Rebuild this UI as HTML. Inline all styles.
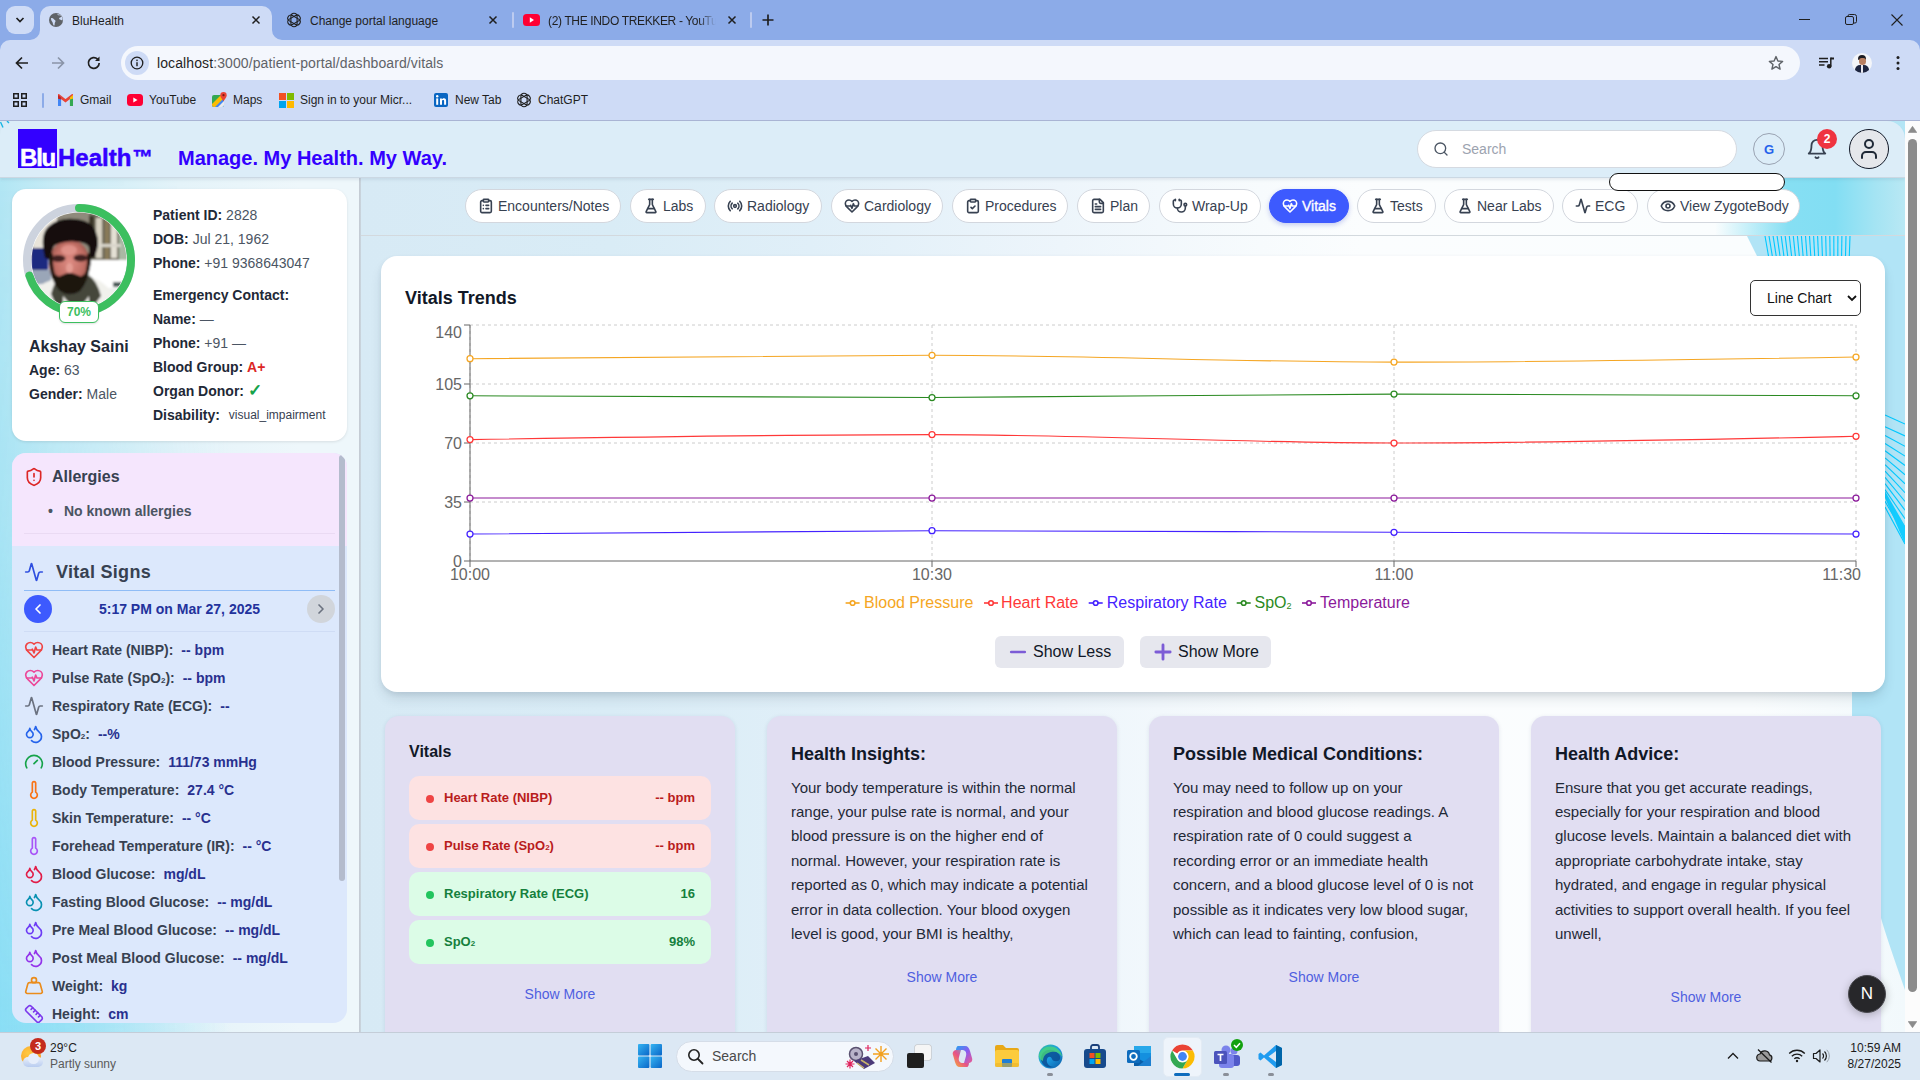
<!DOCTYPE html>
<html lang="en">
<head>
<meta charset="utf-8">
<title>BluHealth</title>
<style>
*{box-sizing:border-box;margin:0;padding:0}
html,body{width:1920px;height:1080px;overflow:hidden;background:#d9ecf7;font-family:"Liberation Sans",sans-serif;color:#1f2937}
.abs{position:absolute}
svg{display:block}
/* ---------- browser chrome ---------- */
#tabstrip{position:absolute;left:0;top:0;width:1920px;height:40px;background:#8cabe8}
#toolbar{position:absolute;left:0;top:40px;width:1920px;height:81px;background:#cedbf6;border-bottom:1px solid #a9b4d4;z-index:5}
.tabtxt{position:absolute;top:14px;font-size:12px;line-height:14px;color:#1f1f1f;white-space:nowrap}
.bm{position:absolute;top:93px;font-size:12px;line-height:15px;color:#1f1f1f;white-space:nowrap}
/* ---------- app ---------- */
#app{position:absolute;left:0;top:120px;width:1905px;height:912px;overflow:hidden;background:#b4e5f5}
#header{position:absolute;left:0;top:1px;width:1905px;height:57px;background:#dcedf8;border-bottom:1px solid #cbd8e3;border-radius:14px 18px 0 0;box-shadow:0 2px 3px rgba(60,90,120,.10);z-index:2}
#side{position:absolute;left:0;top:58px;width:359px;height:854px;background:linear-gradient(90deg,#b2e6f4 0,#c9ecf6 55px,#e4f3f9 180px,#eef7fb 300px)}
#sideov{position:absolute;left:0;top:0;width:230px;height:854px;background:linear-gradient(90deg,rgba(135,221,245,.95) 0,rgba(135,221,245,.8) 60px,rgba(135,221,245,0) 230px);-webkit-mask-image:linear-gradient(180deg,transparent 0,rgba(0,0,0,.25) 40%,#000 100%)}

/* sidebar */
#pcard{position:absolute;left:12px;top:11px;width:335px;height:252px;border-radius:14px;background:#fff;box-shadow:0 1px 3px rgba(0,0,0,.10)}
.pi{position:absolute;left:141px;font-size:14px;line-height:18px;color:#4b5563;white-space:nowrap}
.pi b,.pl b{color:#1f2937;font-weight:700}
.pl{position:absolute;left:17px;font-size:14px;line-height:18px;color:#4b5563;white-space:nowrap}
#vpanel{position:absolute;left:12px;top:275px;width:335px;height:570px;border-radius:14px;overflow:hidden;background:#dce8fc}
.vr{position:absolute;left:40px;font-size:14px;line-height:18px;font-weight:700;color:#374151;white-space:nowrap}
.vr span{color:#28308f;margin-left:8px}
.vi{position:absolute;left:12px;width:20px;height:20px}

/* main */
#mainbg{position:absolute;left:361px;top:57px;width:1544px;height:855px;background:linear-gradient(90deg,#d7eaf5 0,#d9ecf6 250px,#e0eff8 450px,#edf5fb 700px,#f7fbfd 900px,#fbfdfe 1000px,#fafdfe 1390px,#f2f9fc 1544px)}
.pill{position:absolute;top:69px;height:34px;border-radius:17px;background:#fff;border:1px solid #d3d7de;font-size:14px;color:#374151;display:flex;align-items:center;justify-content:flex-start;padding-left:12px;white-space:nowrap}
.pill svg{width:16px;height:16px;margin-right:4px;flex:none;stroke-width:2.400}
.pill.on{background:#3d5afe;border-color:#3d5afe;color:#fff;-webkit-text-stroke:.35px #fff;box-shadow:0 2px 5px rgba(40,60,200,.25)}
#chart{position:absolute;left:381px;top:136px;width:1504px;height:436px;border-radius:16px;background:#fff;box-shadow:0 8px 14px -3px rgba(30,50,70,.16),0 2px 5px rgba(30,60,90,.08)}
.card{position:absolute;top:596px;width:350px;height:340px;border-radius:14px;background:#e1def2;box-shadow:0 1px 4px rgba(30,40,90,.10)}
.card h3{position:absolute;left:24px;font-size:18px;line-height:22px;font-weight:700;color:#111827;white-space:nowrap}
.card p{position:absolute;left:24px;top:59.500px;width:310px;font-size:15px;line-height:24.400px;color:#1f2937;white-space:nowrap}
.sm{position:absolute;font-size:14px;line-height:18px;color:#4f5fe0;white-space:nowrap;transform:translateX(-50%)}
.vrow{position:absolute;left:24px;width:302px;height:44px;border-radius:10px;font-weight:700;font-size:13px;line-height:44px}
.vrow i{position:absolute;left:17px;top:19px;width:8px;height:8px;border-radius:4px}
.vrow span{position:absolute;left:35px;top:0;white-space:nowrap}
.vrow b{position:absolute;right:16px;top:0;white-space:nowrap}
.vrow.r{background:#fde2e2;color:#b91c1c}.vrow.r i{background:#ef4444}
.vrow.g{background:#dcfce7;color:#15803d}.vrow.g i{background:#22c55e}
/* ---------- taskbar ---------- */
#taskbar{position:absolute;left:0;top:1032px;width:1920px;height:48px;background:#dce8f4;border-top:1px solid #c4cdd8}
</style>
</head>
<body>
<!-- BROWSER CHROME -->
<div id="tabstrip">
  <div class="abs" style="left:6px;top:6px;width:28px;height:28px;border-radius:9px;background:#cedbf6"></div>
  <svg class="abs" style="left:14px;top:15px" width="12" height="10" viewBox="0 0 12 10"><path d="M2.5 3 L6 6.5 L9.5 3" fill="none" stroke="#1f1f1f" stroke-width="1.7"/></svg>
  <!-- active tab -->
  <div class="abs" style="left:40px;top:6px;width:232px;height:34px;border-radius:10px 10px 0 0;background:#cedbf6"></div>
  <svg class="abs" style="left:30px;top:30px" width="10" height="10"><path d="M10 0 V10 H0 A10 10 0 0 0 10 0Z" fill="#cedbf6"/></svg>
  <svg class="abs" style="left:272px;top:30px" width="10" height="10"><path d="M0 0 V10 H10 A10 10 0 0 1 0 0Z" fill="#cedbf6"/></svg>
  <svg class="abs" style="left:48px;top:12px" width="16" height="16" viewBox="0 0 16 16"><circle cx="8" cy="8" r="7" fill="#5f6368"/><path d="M3 6.200 C4.200 5.900 5.200 6.300 5.700 7.100 C6.200 7.900 7.400 8 7.500 9 C7.600 10 6.600 10.500 6.700 11.800 C6.800 12.600 6.400 13.400 6 13.800 C5 12.800 4.800 11.600 4.600 10.600 C4.400 9.400 2.800 8.600 3 6.200Z" fill="#cedbf6"/><path d="M9.200 2.200 C9.600 3.200 10.600 3.400 11.400 3.200 C12.200 3 12.800 4 13.600 4.600 C13.200 5.400 12.200 5.300 11.500 5.800 C10.800 6.300 11.100 7.300 12 7.500 C12.800 7.700 13.400 8.200 14.200 8.400 L14.600 7 C14.400 5 13 3 11.400 2.400Z" fill="#cedbf6"/></svg>
  <div class="tabtxt" style="left:72px">BluHealth</div>
  <svg class="abs" style="left:251px;top:15px" width="10" height="10" viewBox="0 0 10 10"><path d="M1.500 1.500 L8.500 8.500 M8.500 1.500 L1.500 8.500" stroke="#1f1f1f" stroke-width="1.500"/></svg>
  <!-- tab 2 -->
  <svg class="abs" style="left:286px;top:12px" width="16" height="16" viewBox="0 0 16 16"><g fill="none" stroke="#1f1f1f" stroke-width="1.100"><rect x="4.900" y="1.300" width="6.200" height="13.400" rx="3.100" transform="rotate(0 8 8)"/><rect x="4.900" y="1.300" width="6.200" height="13.400" rx="3.100" transform="rotate(60 8 8)"/><rect x="4.900" y="1.300" width="6.200" height="13.400" rx="3.100" transform="rotate(120 8 8)"/></g></svg>
  <div class="tabtxt" style="left:310px">Change portal language</div>
  <svg class="abs" style="left:488px;top:15px" width="10" height="10" viewBox="0 0 10 10"><path d="M1.500 1.500 L8.500 8.500 M8.500 1.500 L1.500 8.500" stroke="#1f1f1f" stroke-width="1.500"/></svg>
  <div class="abs" style="left:512px;top:12px;width:2px;height:16px;border-radius:1px;background:#bccbf0"></div>
  <!-- tab 3 -->
  <svg class="abs" style="left:523px;top:14px" width="17" height="12" viewBox="0 0 17 12"><rect width="17" height="12" rx="3.500" fill="#f03"/><path d="M6.800 3.300 L11 6 L6.800 8.700Z" fill="#fff"/></svg>
  <div class="tabtxt" style="left:548px;width:168px;overflow:hidden;letter-spacing:-.35px;-webkit-mask-image:linear-gradient(90deg,#000 150px,transparent 168px)">(2) THE INDO TREKKER - YouTube</div>
  <svg class="abs" style="left:727px;top:15px" width="10" height="10" viewBox="0 0 10 10"><path d="M1.500 1.500 L8.500 8.500 M8.500 1.500 L1.500 8.500" stroke="#1f1f1f" stroke-width="1.500"/></svg>
  <div class="abs" style="left:750px;top:12px;width:2px;height:16px;border-radius:1px;background:#bccbf0"></div>
  <svg class="abs" style="left:762px;top:14px" width="12" height="12" viewBox="0 0 12 12"><path d="M6 0.500 V11.500 M0.500 6 H11.500" stroke="#1f1f1f" stroke-width="1.700"/></svg>
  <!-- window controls -->
  <svg class="abs" style="left:1799px;top:19px" width="12" height="2"><rect width="11" height="1" y="0" fill="#1f1f1f"/></svg>
  <svg class="abs" style="left:1845px;top:14px" width="12" height="12" viewBox="0 0 12 12"><rect x="0.500" y="2.500" width="8" height="8" rx="1.500" fill="none" stroke="#1f1f1f"/><path d="M3 2.500 V2 a1.500 1.500 0 0 1 1.500-1.500 H9.500 a2 2 0 0 1 2 2 V7.500 a1.500 1.500 0 0 1-1.500 1.500 H9" fill="none" stroke="#1f1f1f"/></svg>
  <svg class="abs" style="left:1891px;top:14px" width="12" height="12" viewBox="0 0 12 12"><path d="M0.500 0.500 L11.500 11.500 M11.500 0.500 L0.500 11.500" stroke="#1f1f1f" stroke-width="1.100"/></svg>
</div>
<div id="toolbar">
  <div class="abs" style="left:0;top:0;width:10px;height:10px;background:#8cabe8"></div>
  <div class="abs" style="left:0;top:0;width:20px;height:20px;border-radius:10px 0 0 0;background:#cedbf6"></div>
  <div class="abs" style="left:1910px;top:0;width:10px;height:10px;background:#8cabe8"></div>
  <div class="abs" style="left:1900px;top:0;width:20px;height:20px;border-radius:0 10px 0 0;background:#cedbf6"></div>
  <!-- nav icons -->
  <svg class="abs" style="left:15px;top:16px" width="14" height="14" viewBox="0 0 14 14"><path d="M13 7 H2 M7 1.500 L1.500 7 L7 12.500" fill="none" stroke="#1f1f1f" stroke-width="1.700"/></svg>
  <svg class="abs" style="left:51px;top:16px" width="14" height="14" viewBox="0 0 14 14"><path d="M1 7 H12 M7 1.500 L12.500 7 L7 12.500" fill="none" stroke="#8a94a8" stroke-width="1.700"/></svg>
  <svg class="abs" style="left:86px;top:15px" width="16" height="16" viewBox="0 0 16 16"><path d="M13.200 8 A5.400 5.400 0 1 1 11.600 4.100" fill="none" stroke="#1f1f1f" stroke-width="1.700"/><path d="M13.500 1.500 V6 H9Z" fill="#1f1f1f"/></svg>
  <!-- url pill -->
  <div class="abs" style="left:121px;top:6px;width:1679px;height:34px;border-radius:17px;background:#f4f7fd"></div>
  <div class="abs" style="left:125px;top:11px;width:24px;height:24px;border-radius:12px;background:#cedbf6"></div>
  <svg class="abs" style="left:130px;top:16px" width="14" height="14" viewBox="0 0 14 14"><circle cx="7" cy="7" r="5.800" fill="none" stroke="#1f1f1f" stroke-width="1.300"/><rect x="6.300" y="6.200" width="1.400" height="4" fill="#1f1f1f"/><rect x="6.300" y="3.600" width="1.400" height="1.500" fill="#1f1f1f"/></svg>
  <div class="abs" style="left:157px;top:14px;font-size:14px;line-height:18px;color:#5f6368;white-space:nowrap;letter-spacing:.1px"><span style="color:#1f1f1f">localhost</span>:3000/patient-portal/dashboard/vitals</div>
  <svg class="abs" style="left:1768px;top:15px" width="16" height="16" viewBox="0 0 16 16"><path d="M8 1.600 L9.900 6 L14.600 6.400 L11 9.500 L12.100 14.100 L8 11.600 L3.900 14.100 L5 9.500 L1.400 6.400 L6.100 6Z" fill="none" stroke="#5f6368" stroke-width="1.400" stroke-linejoin="round"/></svg>
  <!-- media -->
  <svg class="abs" style="left:1818px;top:15px" width="17" height="16" viewBox="0 0 17 16"><path d="M1 3.500 H10 M1 6.700 H10 M1 9.900 H6.500" stroke="#1f1f1f" stroke-width="1.500"/><path d="M12.800 2.500 V11" stroke="#1f1f1f" stroke-width="1.500"/><path d="M12.800 2.500 H16 V4.500 H12.800Z" fill="#1f1f1f"/><circle cx="11.200" cy="11.200" r="2.300" fill="#1f1f1f"/></svg>
  <!-- profile -->
  <div class="abs" style="left:1852px;top:13px;width:20px;height:20px;border-radius:10px;background:#f3f5f9;overflow:hidden">
    <div class="abs" style="left:6px;top:2px;width:8px;height:5px;border-radius:4px 4px 1px 1px;background:#1c1c22"></div>
    <div class="abs" style="left:6.500px;top:5px;width:7px;height:7px;border-radius:3px 3px 4px 4px;background:#b98061"></div>
    <div class="abs" style="left:3px;top:12px;width:14px;height:10px;border-radius:5px 5px 0 0;background:#1d2540"></div>
    <div class="abs" style="left:9px;top:12px;width:2px;height:8px;background:#e8e8f0"></div>
  </div>
  <svg class="abs" style="left:1896px;top:15px" width="4" height="16" viewBox="0 0 4 16"><circle cx="2" cy="2.500" r="1.500" fill="#1f1f1f"/><circle cx="2" cy="8" r="1.500" fill="#1f1f1f"/><circle cx="2" cy="13.500" r="1.500" fill="#1f1f1f"/></svg>
  <!-- bookmarks -->
  <svg class="abs" style="left:13px;top:53px" width="14" height="14" viewBox="0 0 14 14"><g fill="none" stroke="#1f1f1f" stroke-width="1.500"><rect x="0.750" y="0.750" width="4.500" height="4.500"/><rect x="8.750" y="0.750" width="4.500" height="4.500"/><rect x="0.750" y="8.750" width="4.500" height="4.500"/><rect x="8.750" y="8.750" width="4.500" height="4.500"/></g></svg>
  <div class="abs" style="left:42px;top:53px;width:2px;height:15px;background:#8cabe8;border-radius:1px"></div>
</div>
<div class="abs" style="left:0;top:0;width:0;height:0;z-index:6">
<!-- bookmark items -->
<svg class="abs" style="left:58px;top:94px" width="15" height="12" viewBox="0 0 15 12"><path d="M1.500 11 V2.200 L7.500 6.800 L13.500 2.200 V11" fill="none" stroke="#ea4335" stroke-width="2.800" stroke-linejoin="miter"/><rect x="0" y="2.800" width="3.100" height="9.200" fill="#4285f4"/><rect x="11.900" y="2.800" width="3.100" height="9.200" fill="#34a853"/><path d="M11.900 3.400 L15 1 V4.800 L11.900 5.600Z" fill="#fbbc04"/><path d="M3.100 3.400 L0 1 V4.800 L3.100 5.600Z" fill="#c5221f"/></svg>
<div class="bm" style="left:80px">Gmail</div>
<svg class="abs" style="left:127px;top:94px" width="16" height="12" viewBox="0 0 16 12"><rect width="16" height="12" rx="3.500" fill="#f03"/><path d="M6.300 3.400 L10.500 6 L6.300 8.600Z" fill="#fff"/></svg>
<div class="bm" style="left:149px">YouTube</div>
<svg class="abs" style="left:212px;top:92px" width="15" height="16" viewBox="0 0 15 16"><rect x="0" y="3" width="12" height="12" rx="2" fill="#34a853"/><path d="M0 13 L8 5 L12 9 V13 a2 2 0 0 1-2 2 H2 a2 2 0 0 1-2-2Z" fill="#4285f4"/><path d="M0 12 L9 3 L12 6 L3 15 H2 a2 2 0 0 1-2-2Z" fill="#fbbc04"/><path d="M6 15 L12 9 V13 a2 2 0 0 1-2 2Z" fill="#e8eaed"/><path d="M11.500 0 a3.200 3.200 0 0 1 3.200 3.200 c0 2.300-3.200 5.800-3.200 5.800 s-3.200-3.500-3.200-5.800 A3.200 3.200 0 0 1 11.500 0Z" fill="#ea4335"/><circle cx="11.500" cy="3.200" r="1.100" fill="#7b1a12"/></svg>
<div class="bm" style="left:233px">Maps</div>
<svg class="abs" style="left:279px;top:93px" width="15" height="15" viewBox="0 0 15 15"><rect x="0" y="0" width="7" height="7" fill="#f25022"/><rect x="8" y="0" width="7" height="7" fill="#7fba00"/><rect x="0" y="8" width="7" height="7" fill="#00a4ef"/><rect x="8" y="8" width="7" height="7" fill="#ffb900"/></svg>
<div class="bm" style="left:300px">Sign in to your Micr...</div>
<svg class="abs" style="left:434px;top:93px" width="14" height="14" viewBox="0 0 14 14"><rect width="14" height="14" rx="2" fill="#0a66c2"/><rect x="2.200" y="5.400" width="2" height="6.400" fill="#fff"/><circle cx="3.200" cy="3.300" r="1.200" fill="#fff"/><path d="M6 5.400 h1.900 v0.900 c.4-.7 1.200-1.100 2.100-1.100 1.600 0 2.100 1 2.100 2.600 v4 h-2 v-3.600 c0-.8-.2-1.300-.9-1.300 -.8 0-1.200.5-1.200 1.400 v3.500 H6Z" fill="#fff"/></svg>
<div class="bm" style="left:455px">New Tab</div>
<svg class="abs" style="left:516px;top:92px" width="16" height="16" viewBox="0 0 16 16"><g fill="none" stroke="#1f1f1f" stroke-width="1.100"><rect x="4.900" y="1.300" width="6.200" height="13.400" rx="3.100" transform="rotate(0 8 8)"/><rect x="4.900" y="1.300" width="6.200" height="13.400" rx="3.100" transform="rotate(60 8 8)"/><rect x="4.900" y="1.300" width="6.200" height="13.400" rx="3.100" transform="rotate(120 8 8)"/></g></svg>
<div class="bm" style="left:538px">ChatGPT</div>
</div>
<!-- APP -->
<div id="app">
  <div class="abs" style="left:0;top:1px;width:16px;height:16px;background:#d9ecf6"></div>
  <svg class="abs" style="left:0;top:1px;z-index:3" width="12" height="8" viewBox="0 0 12 8"><path d="M0.500 1 L3 6.500 M7 0 L9 2" stroke="#18b4e4" stroke-width="1.400" fill="none"/></svg>
  <div id="header">
    <div class="abs" style="left:18px;top:8px;width:39px;height:39px;background:#3300ff"></div>
    <div class="abs" style="left:20px;top:21.500px;font-weight:700;font-size:24px;line-height:30px;color:#fff;white-space:nowrap;letter-spacing:-1.2px;-webkit-text-stroke:.5px #fff">Blu</div>
    <div class="abs" style="left:58px;top:21.500px;font-weight:700;font-size:24px;line-height:30px;color:#3300ff;white-space:nowrap;-webkit-text-stroke:.5px #3300ff">Health<span style="font-size:20px;vertical-align:top;position:relative;top:-1px;left:1.500px;letter-spacing:-1px">&trade;</span></div>
    <div class="abs" style="left:178px;top:23px;font-weight:700;font-size:20px;line-height:28px;color:#3300ff;white-space:nowrap">Manage. My Health. My Way.</div>
    <!-- search -->
    <div class="abs" style="left:1417px;top:9px;width:320px;height:38px;border-radius:19px;background:#fff;border:1px solid #d5dae1"></div>
    <svg class="abs" style="left:1433px;top:20px" width="16" height="16" viewBox="0 0 24 24"><circle cx="11" cy="11" r="8" fill="none" stroke="#4b5563" stroke-width="2"/><path d="M21 21l-4.300-4.300" stroke="#4b5563" stroke-width="2" stroke-linecap="round"/></svg>
    <div class="abs" style="left:1462px;top:19px;font-size:14px;line-height:18px;color:#9ca3af">Search</div>
    <!-- G -->
    <div class="abs" style="left:1753px;top:12px;width:32px;height:32px;border-radius:16px;border:1px solid #9aa3b2;text-align:center;font-weight:700;font-size:13px;line-height:31px;color:#2563eb">G</div>
    <!-- bell -->
    <svg class="abs" style="left:1806px;top:17px" width="22" height="22" viewBox="0 0 24 24" fill="none" stroke="#374151" stroke-width="2" stroke-linecap="round" stroke-linejoin="round"><path d="M6 8a6 6 0 0 1 12 0c0 7 3 9 3 9H3s3-2 3-9"/><path d="M10.300 21a1.940 1.940 0 0 0 3.400 0"/></svg>
    <div class="abs" style="left:1817px;top:8px;width:20px;height:20px;border-radius:10px;background:#ef3340;color:#fff;font-size:12px;font-weight:700;line-height:20px;text-align:center">2</div>
    <!-- user -->
    <div class="abs" style="left:1849px;top:8px;width:40px;height:40px;border-radius:20px;background:#e5e7eb;border:1.500px solid #111827"></div>
    <svg class="abs" style="left:1857px;top:16px" width="24" height="24" viewBox="0 0 24 24" fill="none" stroke="#1f2937" stroke-width="2" stroke-linecap="round" stroke-linejoin="round"><path d="M19 21v-2a4 4 0 0 0-4-4H9a4 4 0 0 0-4 4v2"/><circle cx="12" cy="7" r="4"/></svg>
  </div>
  <div id="side">
<div id="sideov"></div>
<div id="pcard">
  <svg class="abs" style="left:7px;top:10.500px" width="120" height="120" viewBox="0 0 120 120">
    <defs>
      <clipPath id="avc"><circle cx="60" cy="60" r="47.500"/></clipPath>
      <radialGradient id="skin" cx="50%" cy="45%" r="60%"><stop offset="0" stop-color="#dd8b82"/><stop offset=".6" stop-color="#c26f65"/><stop offset="1" stop-color="#7d463d"/></radialGradient>
      <filter id="bl" x="-20%" y="-20%" width="140%" height="140%"><feGaussianBlur stdDeviation="1.200"/></filter>
    </defs>
    <circle cx="60" cy="60" r="52" fill="none" stroke="#cdd3de" stroke-width="8"/>
    <circle cx="60" cy="60" r="52" fill="none" stroke="#3cbf5f" stroke-width="8" stroke-linecap="round" stroke-dasharray="228.700 326.700" transform="rotate(-90 60 60)"/>
    <g clip-path="url(#avc)">
      <rect x="10" y="10" width="100" height="100" fill="#eef0ee"/>
      <g filter="url(#bl)">
        <rect x="8" y="8" width="104" height="50" fill="#8f8a7c"/>
        <rect x="14" y="14" width="24" height="34" fill="#e9e4da"/>
        <rect x="70" y="10" width="40" height="52" fill="#6f6a5a"/>
        <rect x="70" y="16" width="5" height="40" fill="#3b3428"/>
        <rect x="77" y="18" width="6" height="40" fill="#d8d2c2"/>
        <rect x="86" y="20" width="4" height="40" fill="#8a7a58"/>
        <rect x="92" y="22" width="6" height="36" fill="#e4e0d4"/>
        <rect x="100" y="30" width="10" height="30" fill="#a9b8a4"/>
        <rect x="70" y="44" width="32" height="3" fill="#d9d6cc"/>
        <rect x="68" y="60" width="44" height="28" fill="#ffffff"/>
        <rect x="94" y="82" width="12" height="5" fill="#4a5a58"/>
        <rect x="12" y="48" width="17" height="23" fill="#1f2c80"/>
        <rect x="8" y="70" width="24" height="14" fill="#9aa6b8"/>
        <path d="M8 112 L14 92 Q26 80 40 78 L74 78 Q92 84 104 112Z" fill="#f1f1ec"/>
        <path d="M32 94 Q36 80 42 74 L68 74 Q78 80 82 96 L70 112 L40 112Z" fill="#45463b"/>
        <path d="M44 96 L58 112 L70 96 L70 112 L44 112Z" fill="#e9e8e2"/>
        <ellipse cx="50.500" cy="64" rx="20.500" ry="25" fill="url(#skin)"/>
        <path d="M26 58 Q20 34 30 26 Q40 17 56 19 Q72 20 77 32 Q82 44 75 58 L70 58 Q72 48 68 44 Q52 38 36 45 Q32 50 32 60Z" fill="#120e0d"/>
        <path d="M26 44 Q28 22 52 20 Q72 20 78 40 L74 50 Q66 40 52 41 Q38 40 30 52Z" fill="#120e0d"/>
        <path d="M31 68 Q33 82 40 90 Q50 98 61 91 Q69 82 71 66 Q66 76 60 77 Q56 73 51 73 Q45 73 42 77 Q35 76 31 68Z" fill="#1c1311"/>
        <ellipse cx="51" cy="86" rx="12" ry="8" fill="#1c1311"/>
        <path d="M30 52 Q29 64 33 74 L37 78 Q33 66 34 54Z" fill="#1c1311"/>
        <path d="M72 52 Q73 64 69 74 L65 78 Q69 66 68 54Z" fill="#1c1311"/>
        <ellipse cx="39.500" cy="58.500" rx="7" ry="3.400" fill="#33191a" opacity=".9"/>
        <ellipse cx="61.500" cy="58" rx="7" ry="3.400" fill="#33191a" opacity=".9"/>
        <path d="M41 76 Q51 71 61 76 L61 80 Q51 77 41 80Z" fill="#1c1311"/>
        <ellipse cx="50.500" cy="68" rx="3.500" ry="5" fill="#e9a39a" opacity=".8"/>
        <ellipse cx="50" cy="50" rx="8" ry="5" fill="#e89c94" opacity=".7"/>
      </g>
    </g>
  </svg>
  <div class="abs" style="left:47px;top:112px;width:40px;height:22px;border-radius:6px;background:#fff;border:1px solid #3cbf5f;color:#3cbf5f;font-weight:700;font-size:12px;line-height:20px;text-align:center;box-shadow:0 1px 2px rgba(0,0,0,.12)">70%</div>
  <div class="pl" style="top:148px;font-size:16px;line-height:20px;color:#1f2937;font-weight:700">Akshay Saini</div>
  <div class="pl" style="top:172px"><b>Age:</b> 63</div>
  <div class="pl" style="top:196px"><b>Gender:</b> Male</div>
  <div class="pi" style="top:17px"><b>Patient ID:</b> 2828</div>
  <div class="pi" style="top:41px"><b>DOB:</b> Jul 21, 1962</div>
  <div class="pi" style="top:65px"><b>Phone:</b> +91 9368643047</div>
  <div class="pi" style="top:97px"><b>Emergency Contact:</b></div>
  <div class="pi" style="top:121px"><b>Name:</b> &mdash;</div>
  <div class="pi" style="top:145px"><b>Phone:</b> +91 &mdash;</div>
  <div class="pi" style="top:169px"><b>Blood Group:</b> <b style="color:#dc2626">A+</b></div>
  <div class="pi" style="top:193px"><b>Organ Donor:</b> <b style="color:#16a34a;font-size:17px;line-height:18px">&#10003;</b></div>
  <div class="pi" style="top:217px"><b>Disability:</b> <span style="font-size:12px;color:#374151;margin-left:5px;position:relative;top:-1px">visual_impairment</span></div>
</div>
<div id="vpanel">
  <div class="abs" style="left:0;top:0;width:335px;height:93px;background:#f5e6fd"></div>
  <svg class="vi" style="top:13.5px" viewBox="0 0 24 24" fill="none" stroke="#dc2626" stroke-width="2" stroke-linecap="round" stroke-linejoin="round"><path d="M20 13c0 5-3.500 7.500-7.660 8.950a1 1 0 0 1-.67-.01C7.500 20.500 4 18 4 13V6a1 1 0 0 1 1-1c2 0 4.500-1.200 6.240-2.720a1.170 1.170 0 0 1 1.520 0C14.510 3.810 17 5 19 5a1 1 0 0 1 1 1z"/><path d="M12 8v4"/><path d="M12 16h.01"/></svg>
  <div class="abs" style="left:40px;top:14px;font-weight:700;font-size:16px;line-height:20px;color:#374151">Allergies</div>
  <div class="abs" style="left:36px;top:49px;font-weight:700;font-size:14px;line-height:18px;color:#4b5563">&bull;</div>
  <div class="abs" style="left:52px;top:49px;font-weight:700;font-size:14px;line-height:18px;color:#4b5563">No known allergies</div>
  <div class="abs" style="left:12px;top:80px;width:311px;height:1px;background:#eadaf3"></div>
  <svg class="vi" style="top:109px" viewBox="0 0 24 24" fill="none" stroke="#2f4fe0" stroke-width="2" stroke-linecap="round" stroke-linejoin="round"><path d="M22 12h-2.480a2 2 0 0 0-1.930 1.460l-2.350 8.360a.25.25 0 0 1-.48 0L9.240 2.180a.25.25 0 0 0-.48 0l-2.350 8.360A2 2 0 0 1 4.490 12H2"/></svg>
  <div class="abs" style="left:44px;top:108px;font-weight:700;font-size:18px;line-height:22px;color:#374151;letter-spacing:.3px">Vital Signs</div>
  <div class="abs" style="left:12px;top:137px;width:311px;height:1px;background:#8fbcf6"></div>
  <div class="abs" style="left:12px;top:142px;width:28px;height:28px;border-radius:14px;background:#3d5afe"></div>
  <svg class="abs" style="left:18px;top:148px" width="16" height="16" viewBox="0 0 24 24" fill="none" stroke="#fff" stroke-width="2.500" stroke-linecap="round" stroke-linejoin="round"><path d="m15 18-6-6 6-6"/></svg>
  <div class="abs" style="left:40px;top:147px;width:255px;text-align:center;font-weight:700;font-size:14px;line-height:18px;color:#23329c">5:17 PM on Mar 27, 2025</div>
  <div class="abs" style="left:295px;top:142px;width:28px;height:28px;border-radius:14px;background:#d1d5db"></div>
  <svg class="abs" style="left:301px;top:148px" width="16" height="16" viewBox="0 0 24 24" fill="none" stroke="#6b7280" stroke-width="2.500" stroke-linecap="round" stroke-linejoin="round"><path d="m9 18 6-6-6-6"/></svg>
  <div class="abs" style="left:12px;top:178px;width:311px;height:1px;background:#cfdcf5"></div>
  <svg class="vi" style="top:187.3px" viewBox="0 0 24 24" fill="none" stroke="#ef4444" stroke-width="2" stroke-linecap="round" stroke-linejoin="round"><path d="M19 14c1.490-1.460 3-3.210 3-5.500A5.500 5.500 0 0 0 16.500 3c-1.760 0-3 .5-4.500 2-1.500-1.500-2.740-2-4.500-2A5.500 5.500 0 0 0 2 8.500c0 2.300 1.500 4.050 3 5.500l7 7Z"/><path d="M3.220 12H9.500l.5-1 2 4.500 2-7 1.500 3.500h5.270"/></svg>
  <div class="vr" style="top:188.3px">Heart Rate (NIBP):<span>-- bpm</span></div>
  <svg class="vi" style="top:215.3px" viewBox="0 0 24 24" fill="none" stroke="#ec4899" stroke-width="2" stroke-linecap="round" stroke-linejoin="round"><path d="M19 14c1.490-1.460 3-3.210 3-5.500A5.500 5.500 0 0 0 16.500 3c-1.760 0-3 .5-4.500 2-1.500-1.500-2.740-2-4.500-2A5.500 5.500 0 0 0 2 8.500c0 2.300 1.500 4.050 3 5.500l7 7Z"/><path d="M3.220 12H9.500l.5-1 2 4.500 2-7 1.500 3.500h5.270"/></svg>
  <div class="vr" style="top:216.3px">Pulse Rate (SpO<span style="font-size:8px;margin:0;color:inherit">2</span>):<span>-- bpm</span></div>
  <svg class="vi" style="top:243.3px" viewBox="0 0 24 24" fill="none" stroke="#6b7280" stroke-width="2" stroke-linecap="round" stroke-linejoin="round"><path d="M22 12h-2.480a2 2 0 0 0-1.930 1.460l-2.350 8.360a.25.25 0 0 1-.48 0L9.240 2.180a.25.25 0 0 0-.48 0l-2.350 8.360A2 2 0 0 1 4.490 12H2"/></svg>
  <div class="vr" style="top:244.3px">Respiratory Rate (ECG):<span>--</span></div>
  <svg class="vi" style="top:271.3px" viewBox="0 0 24 24" fill="none" stroke="#2563eb" stroke-width="2" stroke-linecap="round" stroke-linejoin="round"><path d="M7 16.300c2.200 0 4-1.830 4-4.050 0-1.160-.57-2.260-1.710-3.190S7.290 6.750 7 5.300c-.29 1.450-1.140 2.840-2.290 3.760S3 11.100 3 12.250c0 2.220 1.800 4.050 4 4.050z"/><path d="M12.560 6.600A10.970 10.970 0 0 0 14 3.020c.5 2.500 2 4.900 4 6.500s3 3.500 3 5.500a6.980 6.980 0 0 1-11.910 4.970"/></svg>
  <div class="vr" style="top:272.3px">SpO<span style="font-size:8px;margin:0;color:inherit">2</span>:<span>--%</span></div>
  <svg class="vi" style="top:299.3px" viewBox="0 0 24 24" fill="none" stroke="#16a34a" stroke-width="2" stroke-linecap="round" stroke-linejoin="round"><path d="m12 14 4-4"/><path d="M3.340 19a10 10 0 1 1 17.320 0"/></svg>
  <div class="vr" style="top:300.3px">Blood Pressure:<span>111/73 mmHg</span></div>
  <svg class="vi" style="top:327.3px" viewBox="0 0 24 24" fill="none" stroke="#f97316" stroke-width="2" stroke-linecap="round" stroke-linejoin="round"><path d="M14 4v10.540a4 4 0 1 1-4 0V4a2 2 0 0 1 4 0Z"/></svg>
  <div class="vr" style="top:328.3px">Body Temperature:<span>27.4 &deg;C</span></div>
  <svg class="vi" style="top:355.3px" viewBox="0 0 24 24" fill="none" stroke="#eab308" stroke-width="2" stroke-linecap="round" stroke-linejoin="round"><path d="M14 4v10.540a4 4 0 1 1-4 0V4a2 2 0 0 1 4 0Z"/></svg>
  <div class="vr" style="top:356.3px">Skin Temperature:<span>-- &deg;C</span></div>
  <svg class="vi" style="top:383.3px" viewBox="0 0 24 24" fill="none" stroke="#a855f7" stroke-width="2" stroke-linecap="round" stroke-linejoin="round"><path d="M14 4v10.540a4 4 0 1 1-4 0V4a2 2 0 0 1 4 0Z"/></svg>
  <div class="vr" style="top:384.3px">Forehead Temperature (IR):<span>-- &deg;C</span></div>
  <svg class="vi" style="top:411.3px" viewBox="0 0 24 24" fill="none" stroke="#e11d48" stroke-width="2" stroke-linecap="round" stroke-linejoin="round"><path d="M7 16.300c2.200 0 4-1.830 4-4.050 0-1.160-.57-2.260-1.710-3.190S7.290 6.750 7 5.300c-.29 1.450-1.140 2.840-2.290 3.760S3 11.100 3 12.250c0 2.220 1.800 4.050 4 4.050z"/><path d="M12.560 6.600A10.970 10.970 0 0 0 14 3.020c.5 2.500 2 4.900 4 6.500s3 3.500 3 5.500a6.980 6.980 0 0 1-11.910 4.970"/></svg>
  <div class="vr" style="top:412.3px">Blood Glucose:<span>mg/dL</span></div>
  <svg class="vi" style="top:439.3px" viewBox="0 0 24 24" fill="none" stroke="#0891b2" stroke-width="2" stroke-linecap="round" stroke-linejoin="round"><path d="M7 16.300c2.200 0 4-1.830 4-4.050 0-1.160-.57-2.260-1.710-3.190S7.290 6.750 7 5.300c-.29 1.450-1.140 2.840-2.290 3.760S3 11.100 3 12.250c0 2.220 1.800 4.050 4 4.050z"/><path d="M12.560 6.600A10.970 10.970 0 0 0 14 3.020c.5 2.500 2 4.900 4 6.500s3 3.500 3 5.500a6.980 6.980 0 0 1-11.910 4.970"/></svg>
  <div class="vr" style="top:440.3px">Fasting Blood Glucose:<span>-- mg/dL</span></div>
  <svg class="vi" style="top:467.3px" viewBox="0 0 24 24" fill="none" stroke="#6d3cf5" stroke-width="2" stroke-linecap="round" stroke-linejoin="round"><path d="M7 16.300c2.200 0 4-1.830 4-4.050 0-1.160-.57-2.260-1.710-3.190S7.290 6.750 7 5.300c-.29 1.450-1.140 2.840-2.290 3.760S3 11.100 3 12.250c0 2.220 1.800 4.050 4 4.050z"/><path d="M12.560 6.600A10.970 10.970 0 0 0 14 3.020c.5 2.500 2 4.900 4 6.500s3 3.500 3 5.500a6.980 6.980 0 0 1-11.910 4.970"/></svg>
  <div class="vr" style="top:468.3px">Pre Meal Blood Glucose:<span>-- mg/dL</span></div>
  <svg class="vi" style="top:495.3px" viewBox="0 0 24 24" fill="none" stroke="#9333ea" stroke-width="2" stroke-linecap="round" stroke-linejoin="round"><path d="M7 16.300c2.200 0 4-1.830 4-4.050 0-1.160-.57-2.260-1.710-3.190S7.290 6.750 7 5.300c-.29 1.450-1.140 2.840-2.290 3.760S3 11.100 3 12.250c0 2.220 1.800 4.050 4 4.050z"/><path d="M12.560 6.600A10.970 10.970 0 0 0 14 3.020c.5 2.500 2 4.900 4 6.500s3 3.500 3 5.500a6.980 6.980 0 0 1-11.910 4.970"/></svg>
  <div class="vr" style="top:496.3px">Post Meal Blood Glucose:<span>-- mg/dL</span></div>
  <svg class="vi" style="top:523.3px" viewBox="0 0 24 24" fill="none" stroke="#ea8c1c" stroke-width="2" stroke-linecap="round" stroke-linejoin="round"><circle cx="12" cy="5" r="3"/><path d="M6.500 8a2 2 0 0 0-1.905 1.460L2.100 18.500A2 2 0 0 0 4 21h16a2 2 0 0 0 1.925-2.540L19.400 9.500A2 2 0 0 0 17.480 8Z"/></svg>
  <div class="vr" style="top:524.3px">Weight:<span>kg</span></div>
  <svg class="vi" style="top:551.3px" viewBox="0 0 24 24" fill="none" stroke="#7c3aed" stroke-width="2" stroke-linecap="round" stroke-linejoin="round"><path d="M21.300 15.300a2.400 2.400 0 0 1 0 3.400l-2.600 2.600a2.400 2.400 0 0 1-3.400 0L2.700 8.700a2.410 2.410 0 0 1 0-3.400l2.600-2.600a2.410 2.410 0 0 1 3.400 0Z"/><path d="m14.500 12.500 2-2"/><path d="m11.500 9.500 2-2"/><path d="m8.500 6.500 2-2"/><path d="m17.500 15.500 2-2"/></svg>
  <div class="vr" style="top:552.3px">Height:<span>cm</span></div>
  <div class="abs" style="left:327px;top:2px;width:6px;height:426px;border-radius:3px;background:#b4bccd"></div>
</div>
</div>
<div class="abs" style="left:359px;top:58px;width:2px;height:854px;background:linear-gradient(90deg,#c2c8d1,#cbd7df)"></div>
  <div id="mainbg"></div>
<!-- right cyan decoration -->
<div class="abs" style="left:1500px;top:58px;width:405px;height:58px;background:linear-gradient(90deg,rgba(134,223,243,0) 0,rgba(134,223,243,0) 215px,#86dff3 288px,#82def3 335px,#a4e4f3 375px,#b9e8f4 405px)"></div>
<svg class="abs" style="left:1700px;top:116px" width="205" height="796" viewBox="0 0 205 796">
  <path d="M47 0 H205 V754 Q186 700 181 682 L152 640 V20 H57Z" fill="#b1e4f6"/>
  <g stroke="#00c8ff" stroke-width="1.100" fill="none">
    <path d="M65.0 0 L68.5 20"/>
    <path d="M69.0 0 L72.3 20"/>
    <path d="M73.1 0 L76.2 20"/>
    <path d="M77.1 0 L80.0 20"/>
    <path d="M81.2 0 L83.9 20"/>
    <path d="M85.2 0 L87.7 20"/>
    <path d="M89.3 0 L91.6 20"/>
    <path d="M93.3 0 L95.4 20"/>
    <path d="M97.4 0 L99.3 20"/>
    <path d="M101.4 0 L103.1 20"/>
    <path d="M105.5 0 L107.0 20"/>
    <path d="M109.5 0 L110.8 20"/>
    <path d="M113.6 0 L114.7 20"/>
    <path d="M117.6 0 L118.5 20"/>
    <path d="M121.7 0 L122.4 20"/>
    <path d="M125.7 0 L126.2 20"/>
    <path d="M129.8 0 L130.1 20"/>
    <path d="M133.8 0 L133.9 20"/>
    <path d="M137.9 0 L137.8 20"/>
    <path d="M141.9 0 L141.6 20"/>
    <path d="M146.0 0 L145.5 20"/>
    <path d="M150.0 0 L149.3 20"/>
    <path d="M185 179.0 L205 188.0"/>
    <path d="M185 190.8 L205 199.9"/>
    <path d="M185 199.6 L205 210.3"/>
    <path d="M185 207.5 L205 220.1"/>
    <path d="M185 214.8 L205 229.5"/>
    <path d="M185 221.8 L205 238.8"/>
    <path d="M185 228.6 L205 247.8"/>
    <path d="M185 235.1 L205 256.7"/>
    <path d="M185 241.4 L205 265.5"/>
    <path d="M185 247.6 L205 274.2"/>
    <path d="M185 253.6 L205 282.8"/>
    <path d="M185 259.5 L205 291.2"/>
    <path d="M185 265.3 L205 299.7"/>
    <path d="M185 271.0 L205 308.0"/>
  </g>
  <path d="M185 262 L205 308 V290 L185 255Z" fill="#14ccff"/>
</svg>
<div class="abs" style="left:361px;top:115px;width:1544px;height:1px;background:#d3d9de"></div>
<div class="pill" style="left:465px;width:156px"><svg viewBox="0 0 24 24" fill="none" stroke="currentColor" stroke-width="2" stroke-linecap="round" stroke-linejoin="round"><rect x="8" y="2" width="8" height="4" rx="1"/><path d="M16 4h2a2 2 0 0 1 2 2v14a2 2 0 0 1-2 2H6a2 2 0 0 1-2-2V6a2 2 0 0 1 2-2h2"/><path d="M12 11h4"/><path d="M12 16h4"/><path d="M8 11h.01"/><path d="M8 16h.01"/></svg>Encounters/Notes</div>
<div class="pill" style="left:630px;width:76px"><svg viewBox="0 0 24 24" fill="none" stroke="currentColor" stroke-width="2" stroke-linecap="round" stroke-linejoin="round"><path d="M10 2v7.527a2 2 0 0 1-.211.896L4.720 20.550a1 1 0 0 0 .9 1.450h12.760a1 1 0 0 0 .9-1.450l-5.069-10.127A2 2 0 0 1 14 9.527V2"/><path d="M8.500 2h7"/><path d="M7 16h10"/></svg>Labs</div>
<div class="pill" style="left:714px;width:108px"><svg viewBox="0 0 24 24" fill="none" stroke="currentColor" stroke-width="2" stroke-linecap="round" stroke-linejoin="round"><path d="M4.900 19.100C1 15.200 1 8.800 4.900 4.900"/><path d="M7.800 16.200c-2.300-2.300-2.300-6.100 0-8.500"/><circle cx="12" cy="12" r="2"/><path d="M16.200 7.800c2.300 2.300 2.300 6.100 0 8.500"/><path d="M19.100 4.900C23 8.800 23 15.100 19.100 19"/></svg>Radiology</div>
<div class="pill" style="left:831px;width:112px"><svg viewBox="0 0 24 24" fill="none" stroke="currentColor" stroke-width="2" stroke-linecap="round" stroke-linejoin="round"><path d="M19 14c1.490-1.460 3-3.210 3-5.500A5.500 5.500 0 0 0 16.500 3c-1.760 0-3 .5-4.500 2-1.500-1.500-2.740-2-4.500-2A5.500 5.500 0 0 0 2 8.500c0 2.300 1.500 4.050 3 5.500l7 7Z"/><path d="M3.220 12H9.500l.5-1 2 4.500 2-7 1.500 3.500h5.270"/></svg>Cardiology</div>
<div class="pill" style="left:952px;width:116px"><svg viewBox="0 0 24 24" fill="none" stroke="currentColor" stroke-width="2" stroke-linecap="round" stroke-linejoin="round"><rect x="8" y="2" width="8" height="4" rx="1"/><path d="M16 4h2a2 2 0 0 1 2 2v14a2 2 0 0 1-2 2H6a2 2 0 0 1-2-2V6a2 2 0 0 1 2-2h2"/><path d="m9 14 2 2 4-4"/></svg>Procedures</div>
<div class="pill" style="left:1077px;width:73px"><svg viewBox="0 0 24 24" fill="none" stroke="currentColor" stroke-width="2" stroke-linecap="round" stroke-linejoin="round"><path d="M15 2H6a2 2 0 0 0-2 2v16a2 2 0 0 0 2 2h12a2 2 0 0 0 2-2V7Z"/><path d="M14 2v4a2 2 0 0 0 2 2h4"/><path d="M10 9H8"/><path d="M16 13H8"/><path d="M16 17H8"/></svg>Plan</div>
<div class="pill" style="left:1159px;width:102px"><svg viewBox="0 0 24 24" fill="none" stroke="currentColor" stroke-width="2" stroke-linecap="round" stroke-linejoin="round"><path d="M11 2v2"/><path d="M5 2v2"/><path d="M5 3H4a2 2 0 0 0-2 2v4a6 6 0 0 0 12 0V5a2 2 0 0 0-2-2h-1"/><path d="M8 15a6 6 0 0 0 12 0v-3"/><circle cx="20" cy="10" r="2"/></svg>Wrap-Up</div>
<div class="pill on" style="left:1269px;width:80px"><svg viewBox="0 0 24 24" fill="none" stroke="currentColor" stroke-width="2" stroke-linecap="round" stroke-linejoin="round"><path d="M19 14c1.490-1.460 3-3.210 3-5.500A5.500 5.500 0 0 0 16.500 3c-1.760 0-3 .5-4.500 2-1.500-1.500-2.740-2-4.500-2A5.500 5.500 0 0 0 2 8.500c0 2.300 1.500 4.050 3 5.500l7 7Z"/><path d="M3.220 12H9.500l.5-1 2 4.500 2-7 1.500 3.500h5.270"/></svg>Vitals</div>
<div class="pill" style="left:1357px;width:79px"><svg viewBox="0 0 24 24" fill="none" stroke="currentColor" stroke-width="2" stroke-linecap="round" stroke-linejoin="round"><path d="M10 2v7.527a2 2 0 0 1-.211.896L4.720 20.550a1 1 0 0 0 .9 1.450h12.760a1 1 0 0 0 .9-1.450l-5.069-10.127A2 2 0 0 1 14 9.527V2"/><path d="M8.500 2h7"/><path d="M7 16h10"/></svg>Tests</div>
<div class="pill" style="left:1444px;width:110px"><svg viewBox="0 0 24 24" fill="none" stroke="currentColor" stroke-width="2" stroke-linecap="round" stroke-linejoin="round"><path d="M10 2v7.527a2 2 0 0 1-.211.896L4.720 20.550a1 1 0 0 0 .9 1.450h12.760a1 1 0 0 0 .9-1.450l-5.069-10.127A2 2 0 0 1 14 9.527V2"/><path d="M8.500 2h7"/><path d="M7 16h10"/></svg>Near Labs</div>
<div class="pill" style="left:1562px;width:76px"><svg viewBox="0 0 24 24" fill="none" stroke="currentColor" stroke-width="2" stroke-linecap="round" stroke-linejoin="round"><path d="M22 12h-2.480a2 2 0 0 0-1.930 1.460l-2.350 8.360a.25.25 0 0 1-.48 0L9.240 2.180a.25.25 0 0 0-.48 0l-2.350 8.360A2 2 0 0 1 4.490 12H2"/></svg>ECG</div>
<div class="pill" style="left:1647px;width:153px"><svg viewBox="0 0 24 24" fill="none" stroke="currentColor" stroke-width="2" stroke-linecap="round" stroke-linejoin="round"><path d="M2.062 12.348a1 1 0 0 1 0-.696 10.750 10.750 0 0 1 19.876 0 1 1 0 0 1 0 .696 10.750 10.750 0 0 1-19.876 0"/><circle cx="12" cy="12" r="3"/></svg>View ZygoteBody</div>
<div class="abs" style="left:1609px;top:53px;width:176px;height:18px;border-radius:9px;background:#fff;border:1.500px solid #111;z-index:3"></div>
<div id="chart">
  <div class="abs" style="left:24px;top:31px;font-weight:700;font-size:18px;line-height:22px;color:#111827;white-space:nowrap">Vitals Trends</div>
  <div class="abs" style="left:1369px;top:24px;width:111px;height:36px;border:1px solid #333;border-radius:5px;background:#fff"></div>
  <div class="abs" style="left:1386px;top:33px;font-size:14px;line-height:18px;color:#111;white-space:nowrap">Line Chart</div>
  <svg class="abs" style="left:1465px;top:37px" width="12" height="10" viewBox="0 0 12 10"><path d="M2 3 L6 7 L10 3" fill="none" stroke="#111" stroke-width="1.800"/></svg>
  <svg class="abs" style="left:0;top:0" width="1504" height="435" viewBox="0 0 1504 435" font-family="Liberation Sans, sans-serif">
    <g stroke="#ccc" stroke-width="1" stroke-dasharray="3 3" fill="none">
      <path d="M89 246 H1475"/>
      <path d="M89 187 H1475"/>
      <path d="M89 128 H1475"/>
      <path d="M89 69 H1475"/>
      <path d="M89 69 V305"/>
      <path d="M551 69 V305"/>
      <path d="M1013 69 V305"/>
      <path d="M1475 69 V305"/>
    </g>
    <g stroke="#666" stroke-width="1" fill="none">
      <path d="M89 305 H1475"/>
      <path d="M89 69 V305"/>
      <path d="M89 305 v6"/>
      <path d="M551 305 v6"/>
      <path d="M1013 305 v6"/>
      <path d="M1475 305 v6"/>
      <path d="M89 305 h-6"/>
      <path d="M89 246 h-6"/>
      <path d="M89 187 h-6"/>
      <path d="M89 128 h-6"/>
      <path d="M89 69 h-6"/>
    </g>
    <g fill="#666" font-size="16">
      <text x="81" y="310.7" text-anchor="end">0</text>
      <text x="81" y="251.7" text-anchor="end">35</text>
      <text x="81" y="192.7" text-anchor="end">70</text>
      <text x="81" y="133.7" text-anchor="end">105</text>
      <text x="81" y="81.7" text-anchor="end">140</text>
      <text x="89" y="324" text-anchor="middle">10:00</text>
      <text x="551" y="324" text-anchor="middle">10:30</text>
      <text x="1013" y="324" text-anchor="middle">11:00</text>
      <text x="1480" y="324" text-anchor="end">11:30</text>
    </g>
    <path d="M89.0 102.7 C243.0 101.0 397.0 99.3 551.0 99.3 C705.0 99.3 859.0 106.1 1013.0 106.1 C1167.0 106.1 1321.0 103.6 1475.0 101.0" fill="none" stroke="#f5a623" stroke-width="1.100"/>
    <circle cx="89.0" cy="102.7" r="3" fill="#fff" stroke="#f5a623" stroke-width="1.250"/>
    <circle cx="551.0" cy="99.3" r="3" fill="#fff" stroke="#f5a623" stroke-width="1.250"/>
    <circle cx="1013.0" cy="106.1" r="3" fill="#fff" stroke="#f5a623" stroke-width="1.250"/>
    <circle cx="1475.0" cy="101.0" r="3" fill="#fff" stroke="#f5a623" stroke-width="1.250"/>
    <path d="M89.0 139.8 C243.0 140.6 397.0 141.5 551.0 141.5 C705.0 141.5 859.0 138.1 1013.0 138.1 C1167.0 138.1 1321.0 139.0 1475.0 139.8" fill="none" stroke="#2b8a22" stroke-width="1.100"/>
    <circle cx="89.0" cy="139.8" r="3" fill="#fff" stroke="#2b8a22" stroke-width="1.250"/>
    <circle cx="551.0" cy="141.5" r="3" fill="#fff" stroke="#2b8a22" stroke-width="1.250"/>
    <circle cx="1013.0" cy="138.1" r="3" fill="#fff" stroke="#2b8a22" stroke-width="1.250"/>
    <circle cx="1475.0" cy="139.8" r="3" fill="#fff" stroke="#2b8a22" stroke-width="1.250"/>
    <path d="M89.0 183.6 C243.0 181.1 397.0 178.6 551.0 178.6 C705.0 178.6 859.0 187.0 1013.0 187.0 C1167.0 187.0 1321.0 183.6 1475.0 180.3" fill="none" stroke="#ff3838" stroke-width="1.100"/>
    <circle cx="89.0" cy="183.6" r="3" fill="#fff" stroke="#ff3838" stroke-width="1.250"/>
    <circle cx="551.0" cy="178.6" r="3" fill="#fff" stroke="#ff3838" stroke-width="1.250"/>
    <circle cx="1013.0" cy="187.0" r="3" fill="#fff" stroke="#ff3838" stroke-width="1.250"/>
    <circle cx="1475.0" cy="180.3" r="3" fill="#fff" stroke="#ff3838" stroke-width="1.250"/>
    <path d="M89.0 242.0 C243.0 242.0 397.0 242.0 551.0 242.0 C705.0 242.0 859.0 242.0 1013.0 242.0 C1167.0 242.0 1321.0 242.0 1475.0 242.0" fill="none" stroke="#8b1a9b" stroke-width="1.100"/>
    <circle cx="89.0" cy="242.0" r="3" fill="#fff" stroke="#8b1a9b" stroke-width="1.250"/>
    <circle cx="551.0" cy="242.0" r="3" fill="#fff" stroke="#8b1a9b" stroke-width="1.250"/>
    <circle cx="1013.0" cy="242.0" r="3" fill="#fff" stroke="#8b1a9b" stroke-width="1.250"/>
    <circle cx="1475.0" cy="242.0" r="3" fill="#fff" stroke="#8b1a9b" stroke-width="1.250"/>
    <path d="M89.0 278.0 C243.0 276.3 397.0 274.7 551.0 274.7 C705.0 274.7 859.0 275.8 1013.0 276.3 C1167.0 276.9 1321.0 277.5 1475.0 278.0" fill="none" stroke="#4422ff" stroke-width="1.100"/>
    <circle cx="89.0" cy="278.0" r="3" fill="#fff" stroke="#4422ff" stroke-width="1.250"/>
    <circle cx="551.0" cy="274.7" r="3" fill="#fff" stroke="#4422ff" stroke-width="1.250"/>
    <circle cx="1013.0" cy="276.3" r="3" fill="#fff" stroke="#4422ff" stroke-width="1.250"/>
    <circle cx="1475.0" cy="278.0" r="3" fill="#fff" stroke="#4422ff" stroke-width="1.250"/>
    <path d="M464.6 347.0 h14" stroke="#f5a623" stroke-width="1.600"/><circle cx="471.6" cy="347.0" r="2.300" fill="#fff" stroke="#f5a623" stroke-width="1.600"/>
    <text x="483.0" y="352.0" font-size="16" fill="#f5a623">Blood Pressure</text>
    <path d="M603.0 347.0 h14" stroke="#ff3838" stroke-width="1.600"/><circle cx="610.0" cy="347.0" r="2.300" fill="#fff" stroke="#ff3838" stroke-width="1.600"/>
    <text x="620.1" y="352.0" font-size="16" fill="#ff3838">Heart Rate</text>
    <path d="M707.7 347.0 h14" stroke="#4422ff" stroke-width="1.600"/><circle cx="714.7" cy="347.0" r="2.300" fill="#fff" stroke="#4422ff" stroke-width="1.600"/>
    <text x="725.8" y="352.0" font-size="16" fill="#4422ff">Respiratory Rate</text>
    <path d="M855.7 347.0 h14" stroke="#2b8a22" stroke-width="1.600"/><circle cx="862.7" cy="347.0" r="2.300" fill="#fff" stroke="#2b8a22" stroke-width="1.600"/>
    <text x="873.5" y="352.0" font-size="16" fill="#2b8a22">SpO<tspan font-size="9" dy="1">2</tspan></text>
    <path d="M921.0 347.0 h14" stroke="#8b1a9b" stroke-width="1.600"/><circle cx="928.0" cy="347.0" r="2.300" fill="#fff" stroke="#8b1a9b" stroke-width="1.600"/>
    <text x="939.1" y="352.0" font-size="16" fill="#8b1a9b">Temperature</text>
  </svg>
  <div class="abs" style="left:614px;top:380px;width:129px;height:32px;border-radius:6px;background:#e6e7ee"></div>
  <svg class="abs" style="left:628px;top:387px" width="18" height="18" viewBox="0 0 24 24" fill="none" stroke="#7c5cd6" stroke-width="3.600" stroke-linecap="round"><path d="M3 12h18"/></svg>
  <div class="abs" style="left:652px;top:386px;font-size:16px;line-height:20px;color:#111827;white-space:nowrap">Show Less</div>
  <div class="abs" style="left:759px;top:380px;width:131px;height:32px;border-radius:6px;background:#e6e7ee"></div>
  <svg class="abs" style="left:773px;top:387px" width="18" height="18" viewBox="0 0 24 24" fill="none" stroke="#7c5cd6" stroke-width="3.800" stroke-linecap="round"><path d="M2.500 12h19M12 2.500v19"/></svg>
  <div class="abs" style="left:797px;top:386px;font-size:16px;line-height:20px;color:#111827;white-space:nowrap">Show More</div>
</div>
<div class="card" style="left:385px">
  <h3 style="top:26px;font-size:16px;line-height:20px">Vitals</h3>
  <div class="vrow r" style="top:60px"><i></i><span>Heart Rate (NIBP)</span><b>-- bpm</b></div>
  <div class="vrow r" style="top:108px"><i></i><span>Pulse Rate (SpO<span style="font-size:8px;position:static">2</span>)</span><b>-- bpm</b></div>
  <div class="vrow g" style="top:156px"><i></i><span>Respiratory Rate (ECG)</span><b>16</b></div>
  <div class="vrow g" style="top:204px"><i></i><span>SpO<span style="font-size:8px;position:static">2</span></span><b>98%</b></div>
  <div class="sm" style="left:175px;top:269px">Show More</div>
</div>
<div class="card" style="left:767px">
  <h3 style="top:27px">Health Insights:</h3>
  <p>Your body temperature is within the normal<br>range, your pulse rate is normal, and your<br>blood pressure is on the higher end of<br>normal. However, your respiration rate is<br>reported as 0, which may indicate a potential<br>error in data collection. Your blood oxygen<br>level is good, your BMI is healthy,</p>
  <div class="sm" style="left:175px;top:252px">Show More</div>
</div>
<div class="card" style="left:1149px">
  <h3 style="top:27px">Possible Medical Conditions:</h3>
  <p>You may need to follow up on your<br>respiration and blood glucose readings. A<br>respiration rate of 0 could suggest a<br>recording error or an immediate health<br>concern, and a blood glucose level of 0 is not<br>possible as it indicates very low blood sugar,<br>which can lead to fainting, confusion,</p>
  <div class="sm" style="left:175px;top:252px">Show More</div>
</div>
<div class="card" style="left:1531px">
  <h3 style="top:27px">Health Advice:</h3>
  <p>Ensure that you get accurate readings,<br>especially for your respiration and blood<br>glucose levels. Maintain a balanced diet with<br>appropriate carbohydrate intake, stay<br>hydrated, and engage in regular physical<br>activities to support overall health. If you feel<br>unwell,</p>
  <div class="sm" style="left:175px;top:272px">Show More</div>
</div>
<div class="abs" style="left:1848px;top:855px;width:38px;height:38px;border-radius:19px;background:#27272a;border:1px solid #4a4a50;box-shadow:0 2px 8px rgba(0,0,0,.25)"></div>
<div class="abs" style="left:1848px;top:855px;width:38px;height:38px;text-align:center;font-size:17px;line-height:38px;color:#fff;font-weight:400;letter-spacing:0">N</div>

</div>
<!-- page scrollbar -->
<div class="abs" style="left:1905px;top:121px;width:15px;height:911px;background:#fcfcfc"></div>
<svg class="abs" style="left:1908px;top:126px" width="9" height="7" viewBox="0 0 9 7"><path d="M4.500 0.300 L8.800 6.500 H0.200Z" fill="#8b8b8b" stroke="#8b8b8b" stroke-width=".6" stroke-linejoin="round"/></svg>
<div class="abs" style="left:1908px;top:139px;width:9px;height:853px;border-radius:4.500px;background:#8b8b8b"></div>
<svg class="abs" style="left:1908px;top:1021px" width="9" height="7" viewBox="0 0 9 7"><path d="M4.500 6.700 L8.800 0.500 H0.200Z" fill="#8b8b8b" stroke="#8b8b8b" stroke-width=".6" stroke-linejoin="round"/></svg>
<!-- TASKBAR -->
<div id="taskbar">
  <!-- weather -->
  <div class="abs" style="left:21px;top:13px;width:20px;height:20px;border-radius:10px;background:radial-gradient(circle at 35% 35%,#ffc940,#f5901e)"></div>
  <div class="abs" style="left:23px;top:24px;width:20px;height:10px;border-radius:5px;background:linear-gradient(#e9f0fb,#b9cdf0)"></div>
  <div class="abs" style="left:28px;top:20px;width:11px;height:11px;border-radius:6px;background:#e6eefb"></div>
  <div class="abs" style="left:30px;top:5px;width:16px;height:16px;border-radius:8px;background:#c42b1c;color:#fff;font-size:11px;font-weight:700;line-height:16px;text-align:center">3</div>
  <div class="abs" style="left:50px;top:8px;font-size:12px;line-height:15px;color:#1b1b1b;white-space:nowrap">29&deg;C</div>
  <div class="abs" style="left:50px;top:24px;font-size:12px;line-height:15px;color:#5a5a5a;white-space:nowrap">Partly sunny</div>
  <!-- start -->
  <svg class="abs" style="left:638px;top:11px" width="24" height="24" viewBox="0 0 24 24"><defs><linearGradient id="wg" x1="0" y1="0" x2="1" y2="1"><stop offset="0" stop-color="#35b4f2"/><stop offset="1" stop-color="#0a66c8"/></linearGradient></defs><g fill="url(#wg)"><rect x="0" y="0" width="11.400" height="11.400" rx="1"/><rect x="12.600" y="0" width="11.400" height="11.400" rx="1"/><rect x="0" y="12.600" width="11.400" height="11.400" rx="1"/><rect x="12.600" y="12.600" width="11.400" height="11.400" rx="1"/></g></svg>
  <!-- search -->
  <div class="abs" style="left:676px;top:8px;width:218px;height:31px;border-radius:15.500px;background:#f4f8fd;border:1px solid #d5dde8"></div>
  <svg class="abs" style="left:687px;top:15px" width="17" height="17" viewBox="0 0 17 17"><circle cx="7" cy="7" r="5.200" fill="none" stroke="#222" stroke-width="1.600"/><path d="M11 11 L15.500 15.500" stroke="#222" stroke-width="1.800" stroke-linecap="round"/></svg>
  <div class="abs" style="left:712px;top:15px;font-size:14px;line-height:17px;color:#4a4a4a">Search</div>
  <svg class="abs" style="left:844px;top:10px" width="48" height="28" viewBox="0 0 48 28"><circle cx="12" cy="11" r="6.500" fill="#b9b3c9" stroke="#5a5170" stroke-width="1.500"/><circle cx="12" cy="11" r="2" fill="#5a5170"/><path d="M10 18 L20 26 L31 20 L24 13Z" fill="#4b3a7a"/><path d="M13 20 L20 25 M17 17 L25 22" stroke="#c9b46a" stroke-width="1.500"/><g stroke="#f2a01e" stroke-width="1.400"><path d="M37 11 V3 M37 11 V19 M37 11 H29 M37 11 H45 M37 11 L31.500 5.500 M37 11 L42.500 16.500 M37 11 L31.500 16.500 M37 11 L42.500 5.500"/></g><g stroke="#e0245e" stroke-width="1.200"><path d="M6 21 V16.500 M6 21 V25.500 M6 21 H1.500 M6 21 H10.500 M6 21 L3 18 M6 21 L9 24 M6 21 L3 24 M6 21 L9 18"/><path d="M24 5 V2 M24 5 V8 M24 5 H21 M24 5 H27"/></g></svg>
  <!-- task view -->
  <div class="abs" style="left:915px;top:12px;width:16px;height:15px;border-radius:2px;background:#f5f5f5;box-shadow:0 0 0 .5px #bbb"></div>
  <div class="abs" style="left:907px;top:20px;width:17px;height:15px;border-radius:2px;background:#1f1f1f"></div>
  <!-- copilot -->
  <svg class="abs" style="left:950px;top:11px" width="25" height="25" viewBox="0 0 25 25"><defs><linearGradient id="cp1" x1="0" y1="0" x2="1" y2="1"><stop offset="0" stop-color="#2aa0f0"/><stop offset=".5" stop-color="#8a5cf0"/><stop offset="1" stop-color="#f05a8c"/></linearGradient><linearGradient id="cp2" x1="0" y1="1" x2="1" y2="0"><stop offset="0" stop-color="#f7b52c"/><stop offset=".5" stop-color="#e8508a"/><stop offset="1" stop-color="#3ac0e8"/></linearGradient></defs><path d="M8 2 H15 C18 2 19 4 20 7 L22 14 C23 17 21 19 18 19 H14 L16 12 C17 8 15 6 12 6 H6 C6 4 7 2 8 2Z" fill="url(#cp1)"/><path d="M17 23 H10 C7 23 6 21 5 18 L3 11 C2 8 4 6 7 6 H11 L9 13 C8 17 10 19 13 19 H19 C19 21 18 23 17 23Z" fill="url(#cp2)"/></svg>
  <!-- explorer -->
  <svg class="abs" style="left:994px;top:11px" width="26" height="24" viewBox="0 0 26 24"><path d="M1 3 a2 2 0 0 1 2-2 h6 l3 3 h11 a2 2 0 0 1 2 2 v3 H1Z" fill="#e8a816"/><rect x="1" y="6" width="24" height="17" rx="2" fill="#fccb3c"/><rect x="8" y="15" width="10" height="8" rx="1" fill="#1f7fd6"/><rect x="1" y="19" width="24" height="4" rx="1.500" fill="#e9b429" opacity=".6"/></svg>
  <!-- edge -->
  <svg class="abs" style="left:1038px;top:11px" width="25" height="25" viewBox="0 0 25 25"><defs><linearGradient id="eg" x1="0" y1="0" x2="1" y2="1"><stop offset="0" stop-color="#35c1a0"/><stop offset=".5" stop-color="#1b9de2"/><stop offset="1" stop-color="#0c59a4"/></linearGradient></defs><circle cx="12.500" cy="12.500" r="12" fill="url(#eg)"/><path d="M3 15 C3 8 9 5 14 6 C20 7 23 12 22 15 C21 18 15 18 14 15 C13 12 10 12 9 15 C8 19 11 23 16 23 C8 25 3 20 3 15Z" fill="#0b4f94" opacity=".85"/><path d="M1 11 C3 4 10 1 16 3 C21 5 24 9 24 13 C22 9 18 7 13 8 C8 9 5 12 5 17 C2 16 1 13 1 11Z" fill="#49d57a" opacity=".8"/></svg>
  <!-- store -->
  <svg class="abs" style="left:1083px;top:10px" width="24" height="26" viewBox="0 0 24 26"><path d="M8 6 V4 a2 2 0 0 1 2-2 h4 a2 2 0 0 1 2 2 v2" fill="none" stroke="#1a3f7a" stroke-width="1.800"/><rect x="1" y="6" width="22" height="19" rx="3" fill="#174a8c"/><rect x="6.500" y="10" width="5" height="5" fill="#f25022"/><rect x="12.500" y="10" width="5" height="5" fill="#7fba00"/><rect x="6.500" y="16" width="5" height="5" fill="#00a4ef"/><rect x="12.500" y="16" width="5" height="5" fill="#ffb900"/></svg>
  <!-- outlook -->
  <svg class="abs" style="left:1126px;top:11px" width="26" height="24" viewBox="0 0 26 24"><rect x="8" y="2" width="17" height="20" rx="2" fill="#1490df"/><rect x="8" y="2" width="17" height="7" fill="#28a8ea"/><path d="M8 12 L25 22 H8Z" fill="#0a5ea8"/><path d="M25 12 L12 22 H25Z" fill="#1c7fd0"/><rect x="1" y="6" width="13" height="13" rx="1.500" fill="#0f6cbd"/><circle cx="7.500" cy="12.500" r="3.300" fill="none" stroke="#fff" stroke-width="1.800"/></svg>
  <!-- chrome (active) -->
  <div class="abs" style="left:1163px;top:4px;width:39px;height:40px;border-radius:5px;background:#eef4fb;border:1px solid #e3ebf4"></div>
  <svg class="abs" style="left:1170px;top:11px" width="25" height="25" viewBox="0 0 25 25"><circle cx="12.500" cy="12.500" r="12" fill="#fff"/><path d="M12.500 .5 A12 12 0 0 1 22.900 6.500 H12.500 A6 6 0 0 0 7.300 9.500 L2.100 6.500 A12 12 0 0 1 12.500 .5Z" fill="#ea4335"/><path d="M22.900 6.500 A12 12 0 0 1 12.500 24.500 L17.700 15.500 A6 6 0 0 0 12.500 6.500Z" fill="#fbbc04"/><path d="M12.500 24.500 A12 12 0 0 1 2.100 6.500 L7.300 15.500 A6 6 0 0 0 17.700 15.500Z" fill="#34a853"/><circle cx="12.500" cy="12.500" r="5.500" fill="#fff"/><circle cx="12.500" cy="12.500" r="4.400" fill="#4285f4"/></svg>
  <div class="abs" style="left:1174px;top:40px;width:16px;height:3px;border-radius:1.500px;background:#0f6cbd"></div>
  <!-- teams -->
  <svg class="abs" style="left:1213px;top:6px" width="32" height="32" viewBox="0 0 32 32"><circle cx="21" cy="12" r="3.500" fill="#7b83eb"/><rect x="15" y="16" width="12" height="11" rx="3" fill="#5059c9"/><circle cx="13" cy="11" r="4.500" fill="#7b83eb"/><rect x="6" y="15" width="15" height="14" rx="3" fill="#7b83eb"/><rect x="1" y="12" width="13" height="13" rx="1.500" fill="#4b53bc"/><path d="M4.500 15.500 H10.500 M7.500 15.500 V22" stroke="#fff" stroke-width="1.700"/><circle cx="24" cy="6" r="6" fill="#13a10e"/><path d="M21 6 L23.300 8.300 L27 4.300" fill="none" stroke="#fff" stroke-width="1.500"/></svg>
  <!-- vscode -->
  <svg class="abs" style="left:1258px;top:11px" width="25" height="25" viewBox="0 0 25 25"><path d="M18 1 L24 4 V21 L18 24 L6 13.500 L2.500 16.500 L0.500 15 V10 L2.500 8.500 L6 11.500Z" fill="#1f9cf0"/><path d="M18 1 L24 4 V21 L18 24Z" fill="#0065a9"/><path d="M18 7 L10.500 12.500 L18 18Z" fill="#dce8f4"/></svg>
  <div class="abs" style="left:1047px;top:40px;width:6px;height:3px;border-radius:1.500px;background:#8a8f98"></div>
  <div class="abs" style="left:1223px;top:40px;width:6px;height:3px;border-radius:1.500px;background:#8a8f98"></div>
  <div class="abs" style="left:1268px;top:40px;width:6px;height:3px;border-radius:1.500px;background:#8a8f98"></div>
  <!-- tray -->
  <svg class="abs" style="left:1727px;top:19px" width="12" height="8" viewBox="0 0 12 8"><path d="M1 6.500 L6 1.500 L11 6.500" fill="none" stroke="#1b1b1b" stroke-width="1.300"/></svg>
  <svg class="abs" style="left:1756px;top:15px" width="18" height="16" viewBox="0 0 18 16"><path d="M4.500 13 a3.500 3.500 0 0 1-.5-7 a5 5 0 0 1 9.500 0.800 a3.200 3.200 0 0 1 0 6.200Z" fill="#9a9a9a" stroke="#1b1b1b" stroke-width="1.200"/><path d="M2 1.500 L15.500 14.500" stroke="#1b1b1b" stroke-width="1.300"/></svg>
  <svg class="abs" style="left:1788px;top:15px" width="18" height="15" viewBox="0 0 18 15"><g fill="none" stroke="#1b1b1b" stroke-width="1.300"><path d="M1.200 5.500 a11 11 0 0 1 15.600 0"/><path d="M3.800 8.300 a7.300 7.300 0 0 1 10.400 0"/><path d="M6.300 10.900 a3.800 3.800 0 0 1 5.400 0"/></g><circle cx="9" cy="13" r="1.200" fill="#1b1b1b"/></svg>
  <svg class="abs" style="left:1812px;top:15px" width="18" height="16" viewBox="0 0 18 16"><path d="M1.500 5.500 H4 L8 2 V14 L4 10.500 H1.500Z" fill="none" stroke="#1b1b1b" stroke-width="1.200" stroke-linejoin="round"/><path d="M10.500 5.500 a3.500 3.500 0 0 1 0 5 M12.500 3.500 a6.300 6.300 0 0 1 0 9" fill="none" stroke="#1b1b1b" stroke-width="1.200"/><path d="M14.800 1.800 a8.800 8.800 0 0 1 0 12.400" fill="none" stroke="#9aa3ad" stroke-width="1"/></svg>
  <div class="abs" style="left:1800px;top:8px;width:101px;text-align:right;font-size:12px;line-height:15px;color:#1b1b1b;white-space:nowrap">10:59 AM</div>
  <div class="abs" style="left:1800px;top:24px;width:101px;text-align:right;font-size:12px;line-height:15px;color:#1b1b1b;white-space:nowrap">8/27/2025</div>
</div>
</body>
</html>
